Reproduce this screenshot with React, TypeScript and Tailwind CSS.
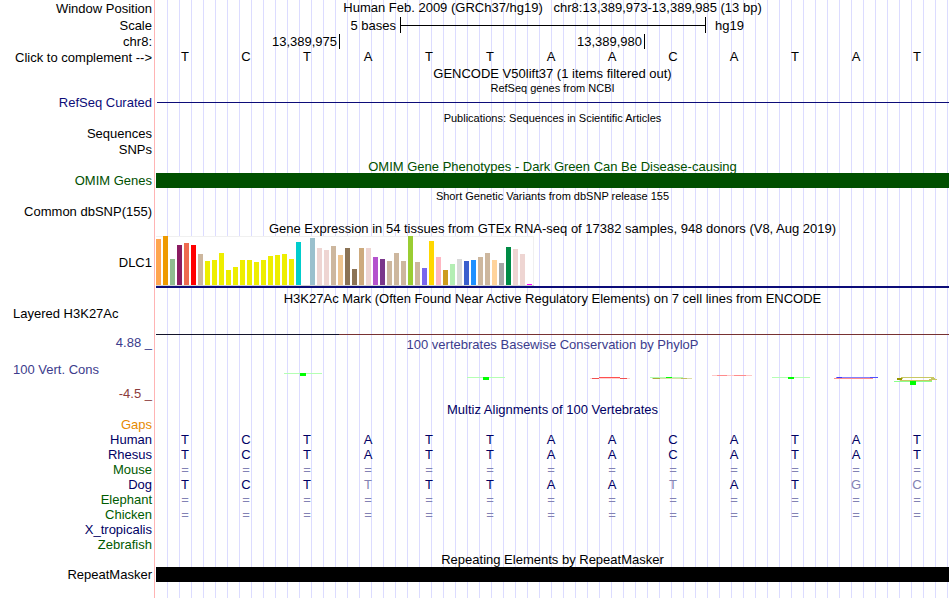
import React from 'react';
import clsx from 'clsx';

interface TrackRowProps {
  label?: string;
  labelClass?: string;
  className?: string;
  children?: React.ReactNode;
}

interface Species {
  name: string;
  color: string;
  bases: string;
  mismatches?: number[];
}

const SEQUENCE = 'TCTATTAACATAT';

const SPECIES: Species[] = [
  { name: 'Gaps', color: 'text-[#e68a00]', bases: '' },
  { name: 'Human', color: 'text-[#000064]', bases: 'TCTATTAACATAT' },
  { name: 'Rhesus', color: 'text-[#000064]', bases: 'TCTATTAACATAT' },
  { name: 'Mouse', color: 'text-[#005a00]', bases: '=============' },
  { name: 'Dog', color: 'text-[#000064]', bases: 'TCTTTTAATATGC', mismatches: [3, 8, 11, 12] },
  { name: 'Elephant', color: 'text-[#005a00]', bases: '=============' },
  { name: 'Chicken', color: 'text-[#005a00]', bases: '=============' },
  { name: 'X_tropicalis', color: 'text-[#000064]', bases: '' },
  { name: 'Zebrafish', color: 'text-[#005a00]', bases: '' },
];

// GTEx tissues: [color, bar height]
const TISSUES: [string, number][] = [
  ['#ffa54f', 46], ['#ee9a00', 49], ['#8fbc8f', 26], ['#8b1c62', 40], ['#ee6a50', 42], ['#ff0000', 40],
  ['#cdb79e', 31], ['#eeee00', 24], ['#eeee00', 25], ['#eeee00', 32], ['#eeee00', 15], ['#eeee00', 18],
  ['#eeee00', 25], ['#eeee00', 25], ['#eeee00', 23], ['#eeee00', 25], ['#eeee00', 29], ['#eeee00', 30],
  ['#eeee00', 31], ['#eeee00', 26], ['#00cdcd', 43], ['#ee82ee', 0], ['#9ac0cd', 47], ['#eed5d2', 37],
  ['#eed5d2', 35], ['#cdb79e', 39], ['#eec591', 30], ['#8b7355', 37], ['#8b7355', 16], ['#cdaa7d', 37],
  ['#eed5d2', 37], ['#b452cd', 28], ['#7a378b', 26], ['#cdb79e', 24], ['#cdb79e', 32], ['#cdb79e', 24],
  ['#9acd32', 49], ['#cdb79e', 23], ['#7a67ee', 17], ['#ffd700', 44], ['#ffb6c1', 28], ['#cd9b1d', 15],
  ['#b4eeb4', 21], ['#d9d9d9', 26], ['#3a5fcd', 24], ['#1e90ff', 25], ['#cdb79e', 28], ['#cdb79e', 32],
  ['#ffd39b', 25], ['#a6a6a6', 22], ['#008b45', 38], ['#eed5d2', 36], ['#eed5d2', 31], ['#ff00ff', 1],
];

const TrackRow: React.FC<TrackRowProps> = ({ label, labelClass, className, children }) => (
  <div className={clsx('flex', className)}>
    <div className={clsx('flex w-[154px] shrink-0 whitespace-pre pr-0.5', labelClass ?? 'items-center justify-end')}>
      {label}
    </div>
    <div className="min-w-0 flex-1 border-l border-[#ffb4b4] px-px">
      <div className="h-full bg-[repeating-linear-gradient(to_right,transparent_0px,transparent_11px,#dcdcff_11px,#dcdcff_12px)]">
        {children}
      </div>
    </div>
  </div>
);

const Title: React.FC<{ children: React.ReactNode; className?: string }> = ({ children, className }) => (
  <div className={clsx('flex h-full justify-center whitespace-pre', className ?? 'items-center')}>{children}</div>
);

const BaseRow: React.FC<{ bases: string; mismatches?: number[] }> = ({ bases, mismatches = [] }) => (
  <div className="grid h-full grid-cols-13 items-start">
    {bases.split('').map((base, i) => (
      <span
        key={i}
        className={clsx('pr-[3px] text-center', (base === '=' || mismatches.includes(i)) && 'text-[#8282b4]')}
      >
        {base}
      </span>
    ))}
  </div>
);

const ExpressionChart: React.FC = () => (
  <svg width="378" height="50" className="block" shapeRendering="crispEdges">
    <rect width="378" height="50" fill="#ffffff" />
    <path d="M0 0.5H377.5V49" fill="none" stroke="#f0f0f0" />
    {TISSUES.map(([color, height], i) => (
      <rect key={i} x={i * 7} y={49 - height} width="5" height={height} fill={color} />
    ))}
    <rect y="49" width="378" height="1" fill="#d2d2d2" />
  </svg>
);

// Conservation logo, the letters are flattened to a few pixels near zero
const ConservationLogo: React.FC = () => (
  <svg viewBox="0 0 793 32" preserveAspectRatio="none" className="block h-8 w-full">
    <g fill="#b4ffb4">
      <rect x="128" y="20" width="38" height="1" />
      <rect x="311" y="24" width="38" height="1" />
      <rect x="494" y="24" width="33" height="1" />
      <rect x="616" y="24" width="38" height="1" />
    </g>
    <g fill="#00ff00">
      <rect x="144" y="20" width="6" height="3" />
      <rect x="327" y="24" width="6" height="3" />
      <rect x="510" y="24" width="6" height="1" />
      <rect x="632" y="24" width="6" height="2" />
    </g>
    <g fill="#ff8c8c">
      <rect x="434" y="25" width="40" height="1" fill="#ffd2d2" />
      <rect x="436" y="25" width="7" height="1" fill="#f05050" />
      <rect x="464" y="25" width="7" height="1" fill="#f05050" />
      <rect x="443" y="24" width="21" height="1" fill="#ff5050" />
      <rect x="556" y="22" width="40" height="1" fill="#ffc8c8" />
      <rect x="561" y="22" width="10" height="1" />
      <rect x="578" y="22" width="12" height="1" />
      <rect x="678" y="25" width="39" height="1" />
    </g>
    <rect x="496" y="25" width="40" height="1" fill="#dcdcaa" />
    <rect x="497" y="25" width="7" height="1" fill="#aaaa3c" />
    <rect x="525" y="25" width="6" height="1" fill="#bebe64" />
    <rect x="680" y="24" width="42" height="1" fill="#8282ff" />
    <rect x="681" y="24" width="5" height="1" fill="#3c3cff" />
    <rect x="714" y="24" width="8" height="1" fill="#5050ff" />
    <g fill="#c8c864">
      <rect x="745" y="24" width="33" height="1" />
      <rect x="743" y="25" width="4" height="1" />
      <rect x="775" y="25" width="4" height="1" />
      <rect x="741" y="25" width="5" height="2" fill="#969600" />
      <rect x="773" y="26" width="8" height="1" />
      <rect x="744" y="27" width="32" height="1" />
    </g>
    <rect x="738" y="28" width="38" height="1" fill="#8cff8c" />
    <rect x="754" y="28" width="6" height="4" fill="#00ff00" />
  </svg>
);

const App: React.FC = () => {
  return (
    <main className="overflow-hidden bg-white font-['Liberation_Sans',Arial,sans-serif] text-[13px] leading-[15px] text-black">
      {/* Ruler */}
      <TrackRow label="Window Position" className="h-4">
        <Title className="items-start">{'Human Feb. 2009 (GRCh37/hg19)   chr8:13,389,973-13,389,985 (13 bp)'}</Title>
      </TrackRow>
      <TrackRow label="Scale" className="h-[18px]">
        <div className="grid h-full grid-cols-13 items-center">
          <span className="col-span-4 pr-1 text-right">5 bases</span>
          <div className="col-span-5 -mr-px flex h-4 items-center border-x border-black">
            <div className="h-px w-full bg-black" />
          </div>
          <span className="col-span-4 pl-2.5">hg19</span>
        </div>
      </TrackRow>
      <TrackRow label="chr8:" className="h-[15px]">
        <div className="grid h-full grid-cols-13 items-start text-right">
          <span className="col-span-3 pr-0.5">13,389,975</span>
          <span className="col-span-5 border-l border-black pr-0.5">13,389,980</span>
          <span className="col-span-5 h-full border-l border-black" />
        </div>
      </TrackRow>
      <TrackRow label="Click to complement -->" className="h-4">
        <BaseRow bases={SEQUENCE} />
      </TrackRow>

      {/* Genes and publications */}
      <TrackRow className="h-4">
        <Title>GENCODE V50lift37 (1 items filtered out)</Title>
      </TrackRow>
      <TrackRow className="h-3.5">
        <Title className="items-center text-[11px]">RefSeq genes from NCBI</Title>
      </TrackRow>
      <TrackRow label="RefSeq Curated" labelClass="items-center justify-end text-[#0c0c78]" className="h-[15px]">
        <div className="flex h-full items-center pl-px">
          <div className="h-px w-full bg-[#0c0c78]" />
        </div>
      </TrackRow>
      <TrackRow className="h-4">
        <Title className="items-end text-[11px]">Publications: Sequences in Scientific Articles</Title>
      </TrackRow>
      <TrackRow label="Sequences" className="h-3.5" />
      <TrackRow label="SNPs" className="h-[19px]" />

      {/* Phenotypes and variants */}
      <TrackRow className="h-3.5">
        <Title className="items-center text-[#005000]">OMIM Gene Phenotypes - Dark Green Can Be Disease-causing</Title>
      </TrackRow>
      <TrackRow label="OMIM Genes" labelClass="items-center justify-end text-[#005000]" className="h-[15px]">
        <div className="h-full bg-[#005000]" />
      </TrackRow>
      <TrackRow className="h-4">
        <Title className="items-end text-[11px]">Short Genetic Variants from dbSNP release 155</Title>
      </TrackRow>
      <TrackRow label="Common dbSNP(155)" labelClass="items-start justify-end" className="h-4" />

      {/* Expression */}
      <TrackRow className="h-4">
        <Title>Gene Expression in 54 tissues from GTEx RNA-seq of 17382 samples, 948 donors (V8, Aug 2019)</Title>
      </TrackRow>
      <TrackRow label="DLC1" className="h-[52px]">
        <ExpressionChart />
        <div className="h-0.5 bg-[#0c0c78]" />
      </TrackRow>

      {/* Regulation */}
      <TrackRow className="h-[18px]">
        <Title className="items-end">
          H3K27Ac Mark (Often Found Near Active Regulatory Elements) on 7 cell lines from ENCODE
        </Title>
      </TrackRow>
      <TrackRow label="Layered H3K27Ac" labelClass="items-start pl-[13px]" className="h-[29px]">
        <div className="grid h-full grid-cols-13 items-end">
          <div className="col-span-3 h-px bg-[#14142a]" />
          <div className="col-span-10 h-px bg-[#783232]" />
        </div>
      </TrackRow>

      {/* Conservation */}
      <TrackRow label="4.88 _" labelClass="items-start justify-end text-[#3c3c8c]" className="h-[18px]">
        <Title className="items-center text-[#3c3c8c]">100 vertebrates Basewise Conservation by PhyloP</Title>
      </TrackRow>
      <TrackRow label="100 Vert. Cons" labelClass="items-center pl-[13px] text-[#3c3c8c]" className="h-8">
        <ConservationLogo />
      </TrackRow>
      <TrackRow label="-4.5 _" labelClass="items-center justify-end text-[#8c3c3c]" className="h-[17px]" />

      {/* Multiz alignments */}
      <TrackRow className="h-[15px]">
        <Title className="items-center text-[#000064]">Multiz Alignments of 100 Vertebrates</Title>
      </TrackRow>
      {SPECIES.map((species) => (
        <TrackRow
          key={species.name}
          label={species.name}
          labelClass={clsx('items-center justify-end', species.color)}
          className="h-[15px] text-[#000064]"
        >
          <BaseRow bases={species.bases} mismatches={species.mismatches} />
        </TrackRow>
      ))}

      {/* Repeats */}
      <TrackRow className="h-[15px]">
        <Title>Repeating Elements by RepeatMasker</Title>
      </TrackRow>
      <TrackRow label="RepeatMasker" className="h-[15px]">
        <div className="h-full bg-black" />
      </TrackRow>
      <TrackRow className="h-4" />
    </main>
  );
};

export default App;
